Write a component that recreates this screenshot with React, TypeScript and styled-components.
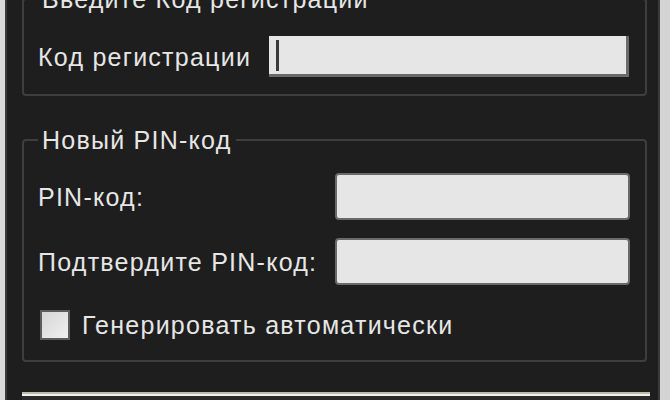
import React from "react"
import styled, { createGlobalStyle } from "styled-components"

const GlobalStyle = createGlobalStyle`
	html, body {
		margin: 0;
		padding: 0;
		background: #1e1e1e;
	}
	body {
		font-family: "Liberation Sans", Arial, sans-serif;
		color: #e6e6e6;
	}
`

const Window = styled.div`
	display: flex;
	width: 670px;
	height: 400px;
	overflow: hidden;
	background: #1e1e1e;
	border-left: 5px solid #d9d9d9;
	border-right: 10px solid #d4d4d4;
	box-sizing: border-box;
`

const Content = styled.div`
	flex: 1;
	display: flex;
	flex-direction: column;
	border-left: 2px solid #3a3a3a;
	border-right: 2px solid #3a3a3a;
	padding: 0 11px 0 15px;
`

const Group = styled.fieldset<{ $top?: boolean }>`
	margin: ${(p) => (p.$top ? "-14px 0 0 0" : "31px 0 0 0")};
	border: 2px solid #3e3e3e;
	border-radius: 4px;
	padding: ${(p) => (p.$top ? "24px 16px 17px 14px" : "20px 13px 20px 14px")};
	min-width: 0;
`

const Legend = styled.legend`
	padding: 0 4px;
	font-size: 25px;
	line-height: 26px;
	letter-spacing: 1.25px;
	color: #e6e6e6;
`

const Row = styled.div`
	display: flex;
	align-items: center;
	gap: 18px;
`

const Label = styled.span`
	font-size: 25px;
	line-height: 30px;
	letter-spacing: 1.25px;
	white-space: nowrap;
`

const CodeInput = styled.div`
	flex: 1;
	height: 38px;
	background: #e6e6e6;
	border-right: 3px solid #6a6a6a;
	border-bottom: 3px solid #6a6a6a;
	display: flex;
	align-items: center;
	padding-left: 7px;
`

const Caret = styled.span`
	display: block;
	width: 3px;
	height: 31px;
	background: #3a3a3a;
`

const PinGrid = styled.div`
	display: grid;
	grid-template-columns: 297px 295px;
	row-gap: 18px;
	align-items: center;
`

const PinInput = styled.div`
	height: 43px;
	background: #e6e6e6;
	border: 2px solid #6a6a6a;
	border-radius: 4px;
`

const CheckRow = styled.label`
	display: flex;
	align-items: center;
	gap: 12px;
	margin: 25px 0 0 2px;
`

const CheckBox = styled.span`
	display: block;
	width: 26px;
	height: 26px;
	border: 2px solid #5c5c5c;
	background: linear-gradient(135deg, #d6d6d6, #f0f0f0);
`

const BottomBar = styled.div`
	margin: 30px 0 0 0;
	height: 20px;
	border-top: 2px solid #c0bca8;
	box-shadow: inset 0 2px 0 #f0f0f0;
	background: #2a2a2a;
	margin-right: -3px;
`

const App: React.FC = () => {
	return (
		<>
			<GlobalStyle />
			<Window>
				<Content>
					<Group $top>
						<Legend>Введите Код регистрации</Legend>
						<Row>
							<Label>Код регистрации</Label>
							<CodeInput>
								<Caret />
							</CodeInput>
						</Row>
					</Group>
					<Group>
						<Legend>Новый PIN-код</Legend>
						<PinGrid>
							<Label>PIN-код:</Label>
							<PinInput />
							<Label>Подтвердите PIN-код:</Label>
							<PinInput />
						</PinGrid>
						<CheckRow>
							<CheckBox />
							<Label>Генерировать автоматически</Label>
						</CheckRow>
					</Group>
					<BottomBar />
				</Content>
			</Window>
		</>
	)
}

export default App
